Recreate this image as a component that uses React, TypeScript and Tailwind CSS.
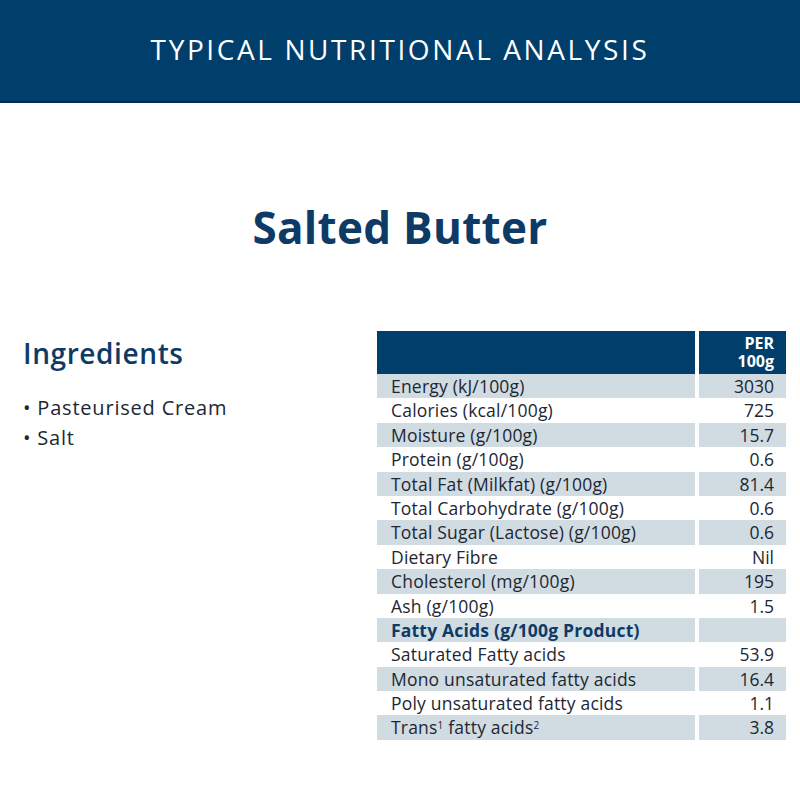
const rows: { label: React.ReactNode; value: string; bold?: boolean }[] = [
  { label: "Energy (kJ/100g)", value: "3030" },
  { label: "Calories (kcal/100g)", value: "725" },
  { label: "Moisture (g/100g)", value: "15.7" },
  { label: "Protein (g/100g)", value: "0.6" },
  { label: "Total Fat (Milkfat) (g/100g)", value: "81.4" },
  { label: "Total Carbohydrate (g/100g)", value: "0.6" },
  { label: "Total Sugar (Lactose) (g/100g)", value: "0.6" },
  { label: "Dietary Fibre", value: "Nil" },
  { label: "Cholesterol (mg/100g)", value: "195" },
  { label: "Ash (g/100g)", value: "1.5" },
  { label: "Fatty Acids (g/100g Product)", value: "", bold: true },
  { label: "Saturated Fatty acids", value: "53.9" },
  { label: "Mono unsaturated fatty acids", value: "16.4" },
  { label: "Poly unsaturated fatty acids", value: "1.1" },
  {
    label: (
      <>
        Trans<sup className="text-[10px]">1</sup> fatty acids<sup className="text-[10px]">2</sup>
      </>
    ),
    value: "3.8",
  },
]

export default function App() {
  return (
    <div className="w-[800px] h-[800px] bg-white font-['Open_Sans','Noto_Sans',sans-serif] text-[#1d2733]">
      {/* Header band */}
      <div className="h-[103px] bg-[#003e6b] border-b-2 border-[#032c4c] flex items-center justify-center">
        <h1 className="text-white text-[28px] font-medium tracking-[2.6px] mt-[-4px]">
          TYPICAL NUTRITIONAL ANALYSIS
        </h1>
      </div>

      {/* Title */}
      <h2 className="mt-[102px] text-center text-[44px] font-bold text-[#0e3b66] leading-none tracking-[0.3px]">
        Salted Butter
      </h2>

      <div className="mt-[80px] flex">
        {/* Ingredients */}
        <div className="w-[377px] pl-[23px] pt-[10px]">
          <h3 className="text-[28px] font-semibold text-[#0e3b66] leading-none tracking-[0.6px]">Ingredients</h3>
          <ul className="mt-[26px] text-[20px] leading-[30px] tracking-[0.8px]">
            <li>• Pasteurised Cream</li>
            <li>• Salt</li>
          </ul>
        </div>

        {/* Table */}
        <div className="w-[409px] text-[17.5px] mt-[2px]">
          <div className="flex gap-[4px] h-[43px]">
            <div className="flex-1 bg-[#003e6b]" />
            <div className="w-[87px] bg-[#003e6b] text-white font-bold text-[16px] leading-[18px] text-right pr-[12px] pt-[3px]">
              PER
              <br />
              100g
            </div>
          </div>
          {rows.map((r, i) => {
            const shaded = i % 2 === 0
            return (
              <div key={i} className="flex gap-[4px] h-[24.4px] leading-[24.4px]">
                <div
                  className={`flex-1 pl-[14px] whitespace-nowrap tracking-[0.2px] ${shaded ? "bg-[#d0dbe2]" : ""} ${
                    r.bold ? "font-bold text-[#0e3b66]" : ""
                  }`}
                >
                  {r.label}
                </div>
                <div className={`w-[87px] text-right pr-[12px] ${shaded ? "bg-[#d0dbe2]" : ""}`}>{r.value}</div>
              </div>
            )
          })}
        </div>
      </div>
    </div>
  )
}
